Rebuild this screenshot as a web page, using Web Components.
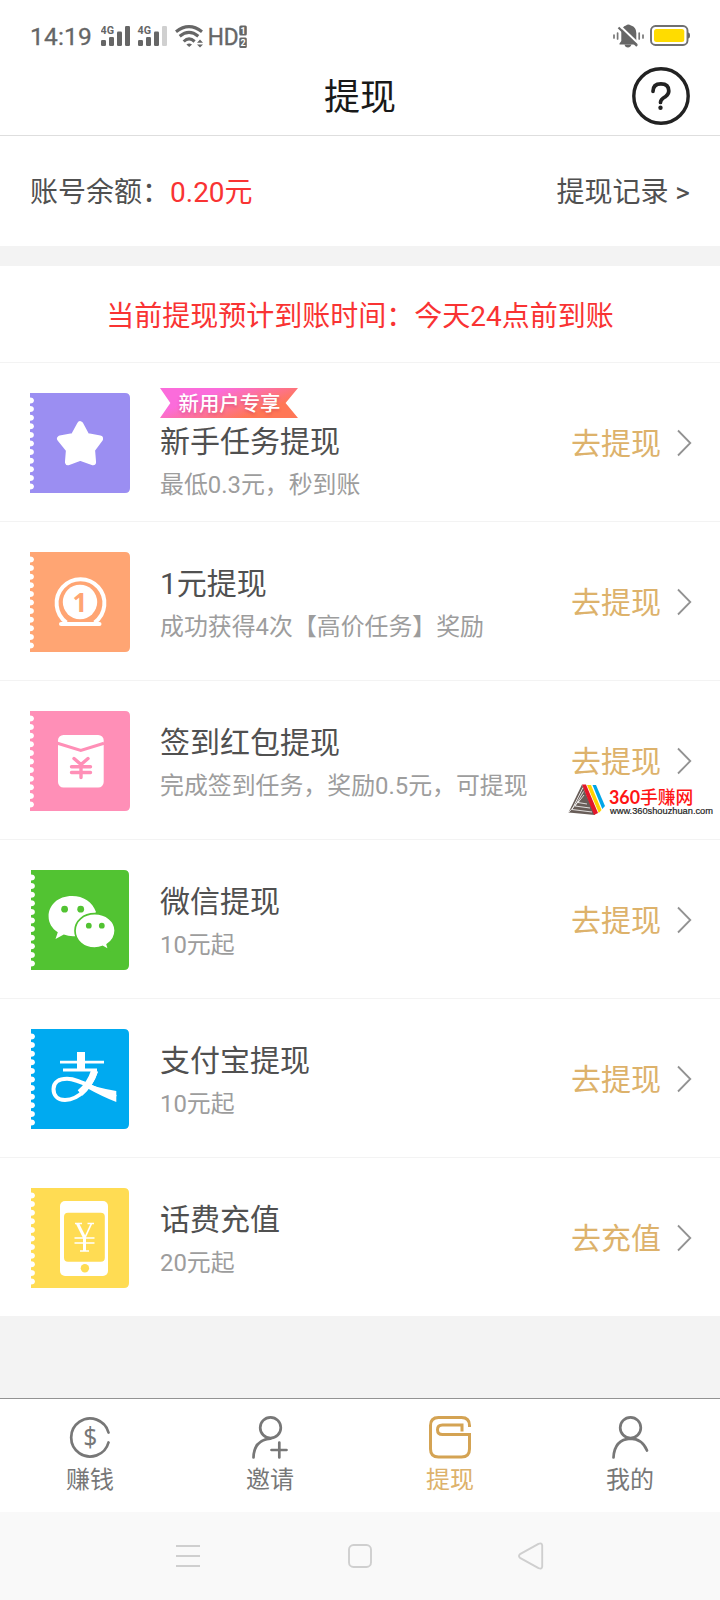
<!DOCTYPE html>
<html lang="zh-CN">
<head>
<meta charset="utf-8">
<title>提现</title>
<style>
body{margin:0;background:#f3f3f3;font-family:Roboto,"Noto Sans CJK SC",sans-serif;color:#505050}
</style>
</head>
<body>
<withdraw-app></withdraw-app>
<script>
const define=(name,html)=>customElements.define(name,class extends HTMLElement{
  constructor(){super();const t=document.createElement('template');t.innerHTML=html;this.attachShadow({mode:'open'}).append(t.content.cloneNode(true));}
});

define('status-bar',`<style>
:host{display:flex;align-items:center;box-sizing:border-box;height:60px;padding:12px 29px 0 30px;color:#666}
.time{width:71px;font-size:24.500px;letter-spacing:.2px;line-height:30px;font-weight:400;-webkit-text-stroke:.3px #666;white-space:nowrap;padding-top:2px;box-sizing:border-box}
svg{display:block;flex:none}.sp{flex:1}
</style>
<span class="time">14:19</span>
<svg width="148" height="28" viewBox="101 22 148 28" fill="#666">
<text x="100.600" y="34" font-family="Roboto" font-size="11" font-weight="700" textLength="13.500" lengthAdjust="spacingAndGlyphs">4G</text>
<rect x="101" y="40" width="5" height="6" rx="1.200"/><rect x="109" y="37" width="5" height="9" rx="1.200"/><rect x="117" y="31.500" width="5" height="14.500" rx="1.200"/><rect x="125" y="26" width="5" height="20" rx="1.200"/>
<text x="137.600" y="34" font-family="Roboto" font-size="11" font-weight="700" textLength="13.500" lengthAdjust="spacingAndGlyphs">4G</text>
<rect x="138" y="40" width="5" height="6" rx="1.200"/><rect x="146" y="37" width="5" height="9" rx="1.200"/><rect x="154" y="31.500" width="5" height="14.500" rx="1.200"/><rect x="162" y="26" width="5" height="20" rx="1.200" fill="#d0d0d0"/>
<g fill="none" stroke="#666" stroke-width="3.100"><path d="M176 31.700Q189 21.500 202 31.700"/><path d="M179.700 36.300Q189 28.500 198.300 36.300"/><path d="M183.700 41.500Q189 36.300 194.600 41.500"/></g>
<path d="M186.400 44.500Q189.200 42.500 192 44.500L189.200 47Z M197 42.700L200 39.600L203 42.700Z M197 44.400H203L200 47.400Z"/>
<text x="207.700" y="45" font-family="Roboto" font-size="24.500" stroke="#666" stroke-width=".4" textLength="31" lengthAdjust="spacingAndGlyphs">HD</text>
<rect x="239.300" y="25.500" width="7.500" height="10" rx="1.500"/><rect x="239.300" y="37.500" width="7.500" height="10.500" rx="1.500"/>
<text x="240.500" y="34" font-family="Roboto" font-size="9" font-weight="700" fill="#fff">1</text><text x="240.500" y="46" font-family="Roboto" font-size="9" font-weight="700" fill="#fff">2</text>
</svg><span class="sp"></span>
<svg width="78" height="28" viewBox="613 22 78 28" fill="#666">
<path d="M619.500 44.500V43.500L621.300 41V32Q622 26.500 626 25.500Q628 23.500 631 25.500Q636.300 27 636.300 33V41L638.500 44.500Z"/><path d="M624.500 44.500H631.500Q630.500 47.500 628 47.500Q625 47.500 624.500 44.500Z"/>
<path d="M619 25L640 45" stroke="#fff" stroke-width="2"/><path d="M618.500 27.500L637 46" stroke="#666" stroke-width="2.200"/>
<path d="M614 35V38M617.600 33V39M639.200 33V39M643 35V38" stroke="#777" stroke-width="1.700" stroke-linecap="round"/>
<rect x="651" y="26" width="36.500" height="19" rx="4.500" fill="none" stroke="#707070" stroke-width="1.900"/><path d="M688 32.500Q690 32.500 690 35.500Q690 38.500 688 38.500Z"/>
<rect x="654" y="29" width="30.300" height="13" rx="2.500" fill="#ffdc00"/>
</svg>`);

define('page-header',`<style>
:host{display:grid;grid-template-columns:1fr auto 1fr;align-items:center;box-sizing:border-box;height:76px;padding:0 30px 3px;border-bottom:1px solid #dedede}
h1{grid-column:2;margin:0;padding-top:4px;font-size:36px;line-height:48px;font-weight:400;color:#191919}
svg{justify-self:end;display:block}
</style><h1><slot></slot></h1>
<svg width="58" height="58" viewBox="0 0 58 58" fill="none" stroke="#222"><circle cx="29" cy="29" r="27.200" stroke-width="3.400"/><path d="M21 24.300Q21 16.800 28.900 16.800Q36.800 16.800 36.800 24Q36.800 27 33.500 29.600Q28.500 32.300 28.500 35.500" stroke-width="3.700" stroke-linecap="round"/><circle cx="28.500" cy="40.800" r="2.200" fill="#222" stroke="none"/></svg>`);

define('balance-bar',`<style>
:host{display:flex;justify-content:space-between;align-items:center;height:106px;padding:4px 30px 0;font-size:28px;line-height:40px;border-bottom:20px solid #f3f3f3}
.amt{color:#f93333}
</style><span>账号余额：<span class="amt"><slot></slot></span></span><span>提现记录 &gt;</span>`);

define('arrival-notice',`<style>
:host{display:flex;justify-content:center;align-items:center;height:91px;padding-top:5px;font-size:28px;line-height:40px;color:#f93333;border-bottom:1px solid #f3f3f3}
</style><slot></slot>`);

const icons={
star:['#9b8ef2',0,`<path d="M50.200 31.500L56.500 43.200L69.800 45.800L61.800 56.700L62.800 69L50.200 64.500L38.200 69L39.200 56.700L30.300 45.800L43.800 43.200Z" fill="#fff" stroke="#fff" stroke-width="6.500" stroke-linejoin="round"/>`],
one:['#ffa573',0,`<path d="M36.500 70.500A23.900 23.900 0 1 1 64.500 70.500" fill="none" stroke="#fff" stroke-width="4"/><circle cx="50" cy="50" r="17.200" fill="#fff"/><path d="M31 72H69.500" stroke="#fff" stroke-width="4" stroke-linecap="round"/><text x="42.500" y="59.500" font-family="Noto Sans" font-weight="700" font-size="26" fill="#ffa573">1</text>`],
red:['#ff8fb7',0,`<rect x="28" y="24" width="45.700" height="52.500" rx="5.500" fill="#fff"/><path d="M27.500 32.200L50.800 39.500L74 32.200" fill="none" stroke="#ff8fb7" stroke-width="3"/><path d="M44 47.500L51 53.500L58 47.500M51 54V66.500M41.500 55.800H60.500M41.500 61.500H60.500" fill="none" stroke="#ff8fb7" stroke-width="3.400" stroke-linecap="round"/>`],
wechat:['#52c332',1,`<path d="M42 26C28 26 18.600 35 18.600 46.500C18.600 53 22 58.500 27.800 62.300L25.500 69L33.800 64.500Q40 67 47 66L66 42C62.500 32 53.500 26 42 26Z" fill="#fff"/><circle cx="34.600" cy="39.200" r="3.400" fill="#52c332"/><circle cx="50.700" cy="39.200" r="3.400" fill="#52c332"/><path d="M64.700 43.700C53.500 43.700 45 51 45 60.700C45 70.500 53.500 78 64.500 78Q69 78 72.500 76.500L78.800 80L77.200 74.500C82.500 71 85.200 66 85.200 60.500C85.200 51 76 43.700 64.700 43.700Z" fill="#fff" stroke="#52c332" stroke-width="1.700"/><circle cx="58.800" cy="55.700" r="2.900" fill="#52c332"/><circle cx="71.800" cy="55.700" r="2.900" fill="#52c332"/>`],
alipay:['#00aaf0',1,`<g fill="none" stroke="#fff"><path d="M51 23V41" stroke-width="8"/><path d="M30 33.200H74M33 41H67" stroke-width="2.800"/><path d="M66 42C62 55 50 71 35 71C27 71 23.500 66 23.500 60C23.500 53 29 49.800 37 49.800C50 49.800 62 60 86 68" stroke-width="4"/><path d="M64.500 42C62 50 57 58 50 64" stroke-width="7"/></g><path d="M50 52Q65 58.500 86.300 62V73Q72 67.500 55 58Z" fill="#fff"/>`],
phone:['#ffdc53',1,`<rect x="30" y="13" width="48" height="75" rx="5" fill="#fff"/><rect x="34" y="24.800" width="40.800" height="49" rx="4" fill="#ffdc53"/><circle cx="54.900" cy="80.300" r="4.200" fill="#ffdc53"/><g fill="none" stroke="#fff"><path d="M47.500 35.500L54.500 49.500" stroke-width="3"/><path d="M61.500 35.500L55 49.500" stroke-width="1.700"/><path d="M54.500 49V63" stroke-width="3"/><path d="M45 35.500H52M57.500 35.500H64M44.500 50H64.500M44.500 55H64.500M50 63H59" stroke-width="1.600"/></g>`]
};
customElements.define('ticket-icon',class extends HTMLElement{
  constructor(){super();this.attachShadow({mode:'open'});}
  connectedCallback(){
    const [color,inset,art]=icons[this.getAttribute('kind')];
    let notches='';for(let i=0;i<11;i++)notches+=`<ellipse cx="${inset}" cy="${7.4+i*8.62}" rx="3.900" ry="3"/>`;
    this.shadowRoot.innerHTML=`<style>:host{display:block;width:100px;height:100px;flex:none}svg{display:block}</style>
<svg width="100" height="100" viewBox="0 0 100 100"><path d="M${inset} 0H${95-inset}Q${100-inset} 0 ${100-inset} 5V95Q${100-inset} 100 ${95-inset} 100H${inset}Z" fill="${color}"/><g fill="#fff">${notches}</g>${art}</svg>`;
  }
});

define('new-badge',`<style>
:host{display:flex;align-items:center;justify-content:center;box-sizing:border-box;width:138px;height:30px;padding:2px 0 0 1px;font-size:20.400px;line-height:28px;font-weight:500;color:#fff;background:linear-gradient(160deg,#fb6cdb 30%,#ff7756 75%);clip-path:polygon(0 0,100% 0,91% 50%,100% 100%,0 100%,7.500% 50%);text-shadow:0 2px 3px #b5205055}
</style><slot></slot>`);

define('withdraw-row',`<style>
:host{display:flex;align-items:center;box-sizing:border-box;height:159px;padding:2px 28px 0 30px;border-bottom:1px solid #f3f3f3}
:host(:last-of-type){height:158px;padding-top:2px;border-bottom:0}
.body{flex:1;margin-left:30px;padding-top:5px;white-space:nowrap}
.title{font-size:30px;line-height:44px}.sub{font-size:23.900px;line-height:42px;color:#9d9d9d}
:host([fresh]) .body{padding-top:8px}
:host([fresh]) .title{padding-top:2px}
.act{font-size:30px;line-height:44px;padding-top:2px;color:#ddb26b}
svg{display:block;margin-left:15px}
</style><slot name="icon"></slot>
<div class="body"><slot name="badge"></slot><div class="title"><slot name="title"></slot></div><div class="sub"><slot name="sub"></slot></div></div>
<span class="act"><slot name="action"></slot></span>
<svg width="16" height="28" viewBox="0 0 16 28" fill="none" stroke="#929292" stroke-width="1.800"><path d="M2 1.500L14.300 14L2 26.500"/></svg>`);

customElements.define('withdraw-list',class extends HTMLElement{
  constructor(){super();
    const rows=[['star','新手任务提现','最低0.3元，秒到账','去提现','新用户专享'],['one','1元提现','成功获得4次【高价任务】奖励','去提现'],['red','签到红包提现','完成签到任务，奖励0.5元，可提现','去提现'],['wechat','微信提现','10元起','去提现'],['alipay','支付宝提现','10元起','去提现'],['phone','话费充值','20元起','去充值']];
    this.attachShadow({mode:'open'}).innerHTML='<style>:host{display:block;background:#fff}</style>'+rows.map(([kind,title,sub,action,badge])=>`<withdraw-row ${badge?'fresh':''}><ticket-icon slot="icon" kind="${kind}"></ticket-icon>${badge?`<new-badge slot="badge">${badge}</new-badge>`:''}<span slot="title">${title}</span><span slot="sub">${sub}</span><span slot="action">${action}</span></withdraw-row>`).join('');
  }
});

define('tab-item',`<style>
:host{display:flex;flex-direction:column;align-items:center;flex:1;padding-top:16px;font-size:24px;line-height:42px;color:#777}
:host([active]){color:#ddb26b}
</style><slot name="icon"></slot><slot></slot>`);

define('tab-bar',`<style>
:host{display:flex;height:113px;border-top:1px solid #929292;background:#fff}
svg{display:block;width:44px;height:44px;fill:none;stroke:#777;stroke-width:2.700;stroke-linecap:round;stroke-linejoin:round}
</style>
<tab-item><svg slot="icon" viewBox="68 1415 44 44"><path d="M108.500 1432.500A19 19 0 1 0 108.500 1442.500"/><text x="83.300" y="1446.500" font-family="Noto Sans" font-size="28" textLength="14" lengthAdjust="spacingAndGlyphs" fill="#777" stroke="none">$</text></svg>赚钱</tab-item>
<tab-item><svg slot="icon" viewBox="248 1415 44 44"><circle cx="270.500" cy="1427.700" r="10.300"/><path d="M253.500 1457.500Q254 1440 270.500 1438.700M271.500 1450H286.500M279.300 1442.500V1457.500"/></svg>邀请</tab-item>
<tab-item active><svg slot="icon" viewBox="428 1415 44 44" style="stroke:#d4a353;stroke-width:3;stroke-linecap:butt;stroke-linejoin:miter"><path d="M469.500 1427V1425.500Q469.500 1417.500 461.500 1417.500H438.500Q430.500 1417.500 430.500 1425.500V1449Q430.500 1457 438.500 1457H461.500Q469.500 1457 469.500 1449V1434.500H442.500Q437.500 1434.500 437.500 1429.700Q437.500 1425 442.500 1425H462V1431.500"/></svg>提现</tab-item>
<tab-item><svg slot="icon" viewBox="608 1415 44 44"><circle cx="630.500" cy="1427.700" r="10.300"/><path d="M613.500 1457.500Q614.500 1439.500 630.500 1438.700Q642 1438.700 647 1450.500"/></svg>我的</tab-item>`);

define('system-nav',`<style>
:host{display:flex;justify-content:space-between;align-items:center;box-sizing:border-box;height:88px;padding:0 176px 0 175px;background:#f9f9f9}
svg{display:block;fill:none;stroke:#cfcfcf;stroke-width:1.900;stroke-linejoin:round}
</style>
<svg width="26" height="28" viewBox="0 0 26 28"><path d="M1 4H25M1 14H25M1 24H25"/></svg>
<svg width="26" height="28" viewBox="0 0 26 28"><rect x="2" y="3" width="22" height="22" rx="4.500"/></svg>
<svg width="26" height="28" viewBox="0 0 26 28"><path d="M2 12.200L20.500 1.800Q24 .5 24.200 3.500V24.500Q24 27.500 20.500 26.200L2 15.800Q0 14 2 12.200Z"/></svg>`);

define('site-watermark',`<style>:host{display:block;width:148px;height:34px}svg{display:block}</style>
<svg width="148" height="34" viewBox="567 783 148 34"><path d="M582 784.500L568.500 812.500L595 815Z" fill="#685d58"/><path d="M572 809.500L583 787.500M572 809.500L592 812M575 806L583.500 791.500M575 806L590 808M578 802.500L584 795M578 802.500L587 804M569 812L579 801" stroke="#fff" stroke-width=".8" fill="none"/>
<path d="M582 784.500H586L598 813L594 815Z" fill="#e3172a"/><path d="M587 785H591L601.500 810L598.800 813Z" fill="#ffd200"/><path d="M592.500 785H596L605 806L602.300 809Z" fill="#00a6e8"/>
<g font-family="Roboto,Noto Sans CJK SC,sans-serif" font-size="18" font-weight="500" fill="#ff1414"><text x="609" y="803.700" font-family="Lato" font-weight="700" font-size="18.500" textLength="31" lengthAdjust="spacingAndGlyphs">360</text><text x="640" y="803.500" font-size="17.800">手赚网</text></g>
<text x="610" y="814" font-family="Liberation Sans" font-size="9.500" fill="#222" stroke="#222" stroke-width=".2" textLength="103" lengthAdjust="spacingAndGlyphs">www.360shouzhuan.com</text></svg>`);

define('withdraw-app',`<style>
:host{display:flex;flex-direction:column;position:relative;width:720px;height:1600px;overflow:hidden}
.top{background:#fff}.space{flex:1;background:#f3f3f3}
site-watermark{position:absolute;left:567px;top:783px}
</style><div class="top"><status-bar></status-bar><page-header>提现</page-header><balance-bar>0.20元</balance-bar><arrival-notice>当前提现预计到账时间：今天24点前到账</arrival-notice></div>
<withdraw-list></withdraw-list><div class="space"></div><tab-bar></tab-bar><system-nav></system-nav><site-watermark></site-watermark>`);
</script>
</body>
</html>
